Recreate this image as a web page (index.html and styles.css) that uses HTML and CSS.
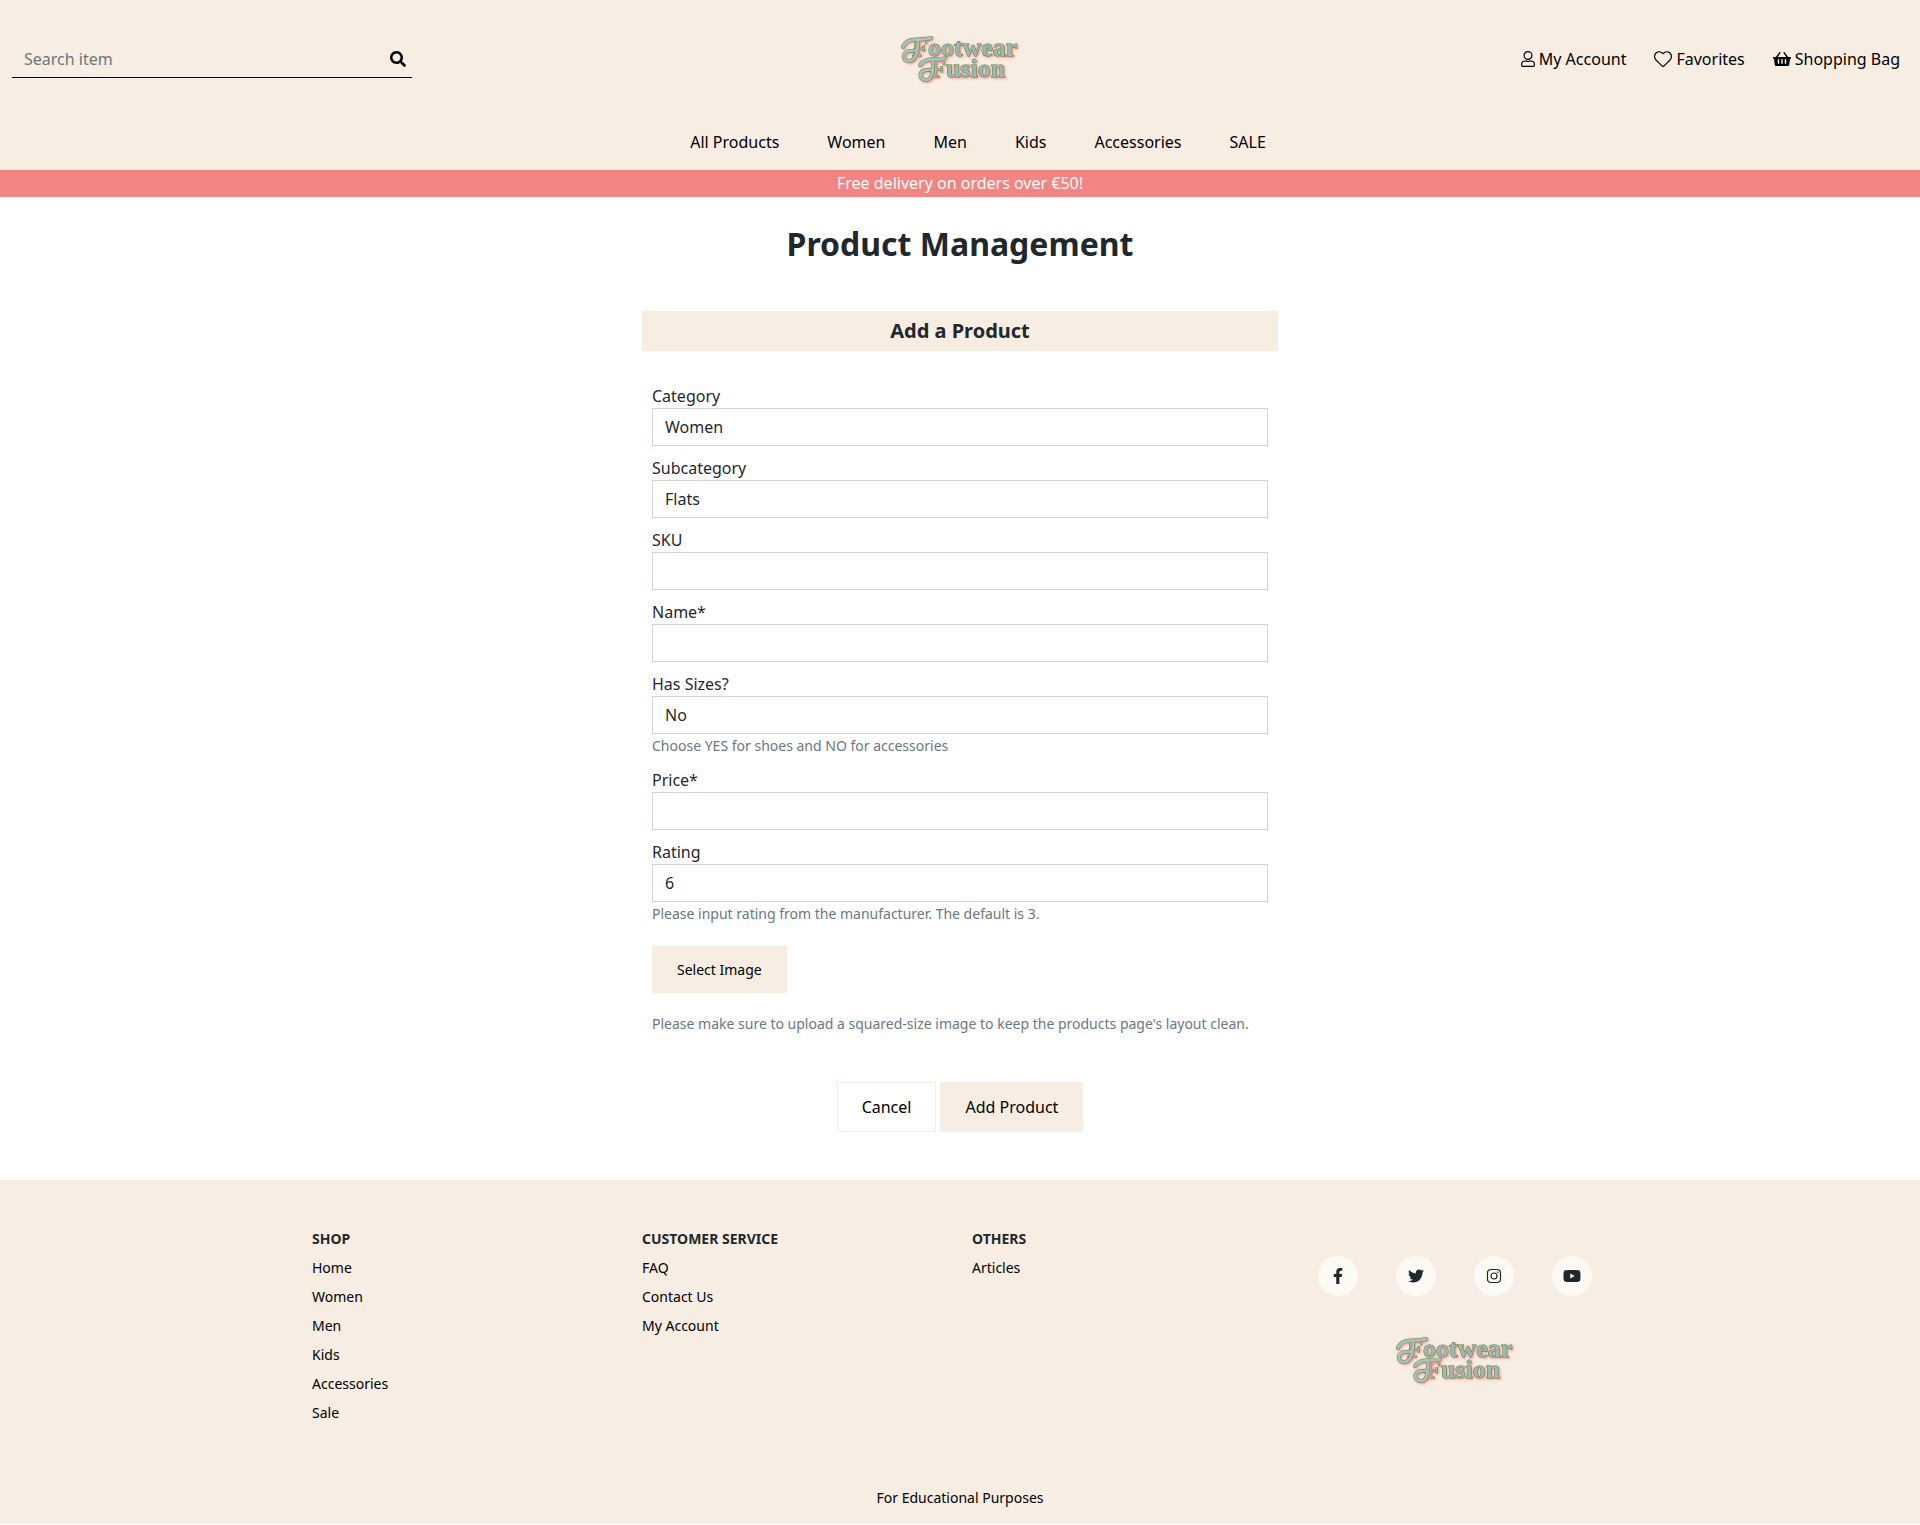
FILE: index.html
```
<!DOCTYPE html>
<html lang="en">
<head>
<meta charset="utf-8">
<meta name="viewport" content="width=device-width, initial-scale=1">
<title>Footwear Fusion - Product Management</title>
<link rel="stylesheet" href="styles.css">
</head>
<body>
<svg class="defs" aria-hidden="true">
  <symbol id="logo" viewBox="0 0 120 52">
    <text class="logo-text" x="12" y="23">Footwear</text>
    <text class="logo-text" x="30" y="44">Fusion</text>
    <g class="logo-swash">
      <path d="M31 5C22 8 7 3 3 14"/>
      <path d="M18 7C18 17 17 28 9 28c-7 0-7-9 0-10 3 0 6 0 8-1"/>
      <path d="M45 25C38 28 26 23 20 32"/>
      <path d="M33 27C33 37 33 47 26 47c-7 0-8-9 0-10 3 0 5 0 7-1"/>
    </g>
    <g class="logo-swash-fill">
      <path d="M31 5C22 8 7 3 3 14"/>
      <path d="M18 7C18 17 17 28 9 28c-7 0-7-9 0-10 3 0 6 0 8-1"/>
      <path d="M45 25C38 28 26 23 20 32"/>
      <path d="M33 27C33 37 33 47 26 47c-7 0-8-9 0-10 3 0 5 0 7-1"/>
    </g>
  </symbol>
</svg>

<header class="site-header">
  <div class="top-bar">
    <form class="search" role="search">
      <input class="search-input" type="search" placeholder="Search item" aria-label="Search item">
      <button class="search-button" type="button" aria-label="Search">
        <svg class="icon" viewBox="0 0 512 512"><path d="M505 442.700 405.300 343c-4.500-4.500-10.600-7-17-7H372c27.600-35.300 44-79.700 44-128C416 93.100 322.900 0 208 0S0 93.100 0 208s93.100 208 208 208c48.300 0 92.700-16.400 128-44v16.300c0 6.400 2.500 12.500 7 17l99.700 99.700c9.400 9.400 24.600 9.400 33.900 0l28.300-28.300c9.400-9.400 9.400-24.600.1-34zM208 336c-70.700 0-128-57.200-128-128 0-70.700 57.200-128 128-128 70.700 0 128 57.200 128 128 0 70.700-57.200 128-128 128z"/></svg>
      </button>
    </form>
    <a class="brand" href="#" aria-label="Footwear Fusion"><svg class="logo"><use href="#logo"/></svg></a>
    <nav class="user-links" aria-label="Account">
      <a href="#"><svg class="icon icon-line" viewBox="0 0 14 16"><circle cx="7" cy="4.500" r="3.900"/><path d="M4.200 10C2 10 .6 11.700.6 13.700v.6c0 .6.500 1.100 1.100 1.100h10.600c.6 0 1.100-.5 1.100-1.100v-.6c0-2-1.400-3.700-3.600-3.700-.8 0-1.300.5-2.800.5S5 10 4.200 10z"/></svg>My Account</a>
      <a href="#"><svg class="icon icon-line" viewBox="0 0 18 16"><path d="M9 2.700C7.200.6 4.300.1 2.300 1.800c-2.400 2-2.100 5.300-.3 7.200l6.200 6.100c.5.500 1.100.5 1.600 0L16 9c1.800-1.900 2.100-5.200-.3-7.200C13.700.1 10.800.6 9 2.700z"/></svg>Favorites</a>
      <a href="#"><svg class="icon" viewBox="0 0 576 512"><path d="M576 216v16c0 13.300-10.700 24-24 24h-8l-26.100 182.800C514.500 462.400 494.300 480 470.400 480H105.600c-23.900 0-44.100-17.600-47.500-41.200L32 256h-8c-13.300 0-24-10.700-24-24v-16c0-13.300 10.700-24 24-24h67.300L198.600 44.400c7.900-10.700 22.900-13 33.600-5.200 10.700 7.900 13 22.900 5.200 33.600L150.600 192h274.800L338.600 72.800c-7.900-10.700-5.500-25.700 5.200-33.600 10.700-7.900 25.700-5.500 33.600 5.200L484.700 192H552c13.300 0 24 10.700 24 24zM312 392V280c0-13.300-10.700-24-24-24s-24 10.700-24 24v112c0 13.300 10.700 24 24 24s24-10.700 24-24zm112 0V280c0-13.300-10.700-24-24-24s-24 10.700-24 24v112c0 13.300 10.700 24 24 24s24-10.700 24-24zm-224 0V280c0-13.300-10.700-24-24-24s-24 10.700-24 24v112c0 13.300 10.700 24 24 24s24-10.700 24-24z"/></svg>Shopping Bag</a>
    </nav>
  </div>
  <nav class="main-nav" aria-label="Products">
    <a href="#">All Products</a>
    <a href="#">Women</a>
    <a href="#">Men</a>
    <a href="#">Kids</a>
    <a href="#">Accessories</a>
    <a href="#">SALE</a>
  </nav>
</header>
<p class="delivery-banner">Free delivery on orders over €50!</p>

<main class="page">
  <h1 class="page-title">Product Management</h1>
  <section class="product">
    <h2 class="product-title">Add a Product</h2>
    <form class="product-form">
      <div class="field">
        <label for="category">Category</label>
        <select class="control" id="category"><option>Women</option><option>Men</option><option>Kids</option></select>
      </div>
      <div class="field">
        <label for="subcategory">Subcategory</label>
        <select class="control" id="subcategory"><option>Flats</option></select>
      </div>
      <div class="field">
        <label for="sku">SKU</label>
        <input class="control" id="sku" type="text">
      </div>
      <div class="field">
        <label for="name">Name*</label>
        <input class="control" id="name" type="text">
      </div>
      <div class="field">
        <label for="sizes">Has Sizes?</label>
        <select class="control" id="sizes"><option>No</option><option>Yes</option></select>
        <small class="help">Choose YES for shoes and NO for accessories</small>
      </div>
      <div class="field">
        <label for="price">Price*</label>
        <input class="control" id="price" type="text">
      </div>
      <div class="field">
        <label for="rating">Rating</label>
        <input class="control" id="rating" type="text" value="6">
        <small class="help">Please input rating from the manufacturer. The default is 3.</small>
      </div>
      <button class="select-image" type="button">Select Image</button>
      <small class="help">Please make sure to upload a squared-size image to keep the products page's layout clean.</small>
      <div class="actions">
        <a class="button button-outline" href="#">Cancel</a>
        <button class="button" type="button">Add Product</button>
      </div>
    </form>
  </section>
</main>

<footer class="site-footer">
  <div class="footer-columns">
    <section>
      <h3>Shop</h3>
      <ul>
        <li><a href="#">Home</a></li>
        <li><a href="#">Women</a></li>
        <li><a href="#">Men</a></li>
        <li><a href="#">Kids</a></li>
        <li><a href="#">Accessories</a></li>
        <li><a href="#">Sale</a></li>
      </ul>
    </section>
    <section>
      <h3>Customer Service</h3>
      <ul>
        <li><a href="#">FAQ</a></li>
        <li><a href="#">Contact Us</a></li>
        <li><a href="#">My Account</a></li>
      </ul>
    </section>
    <section>
      <h3>Others</h3>
      <ul>
        <li><a href="#">Articles</a></li>
      </ul>
    </section>
    <section class="social">
      <div class="social-links">
        <a href="#" aria-label="Facebook"><svg class="icon" viewBox="0 0 320 512"><path d="m279.100 288 14.200-92.700h-88.900v-60.100c0-25.300 12.400-50.100 52.200-50.100H297V6.300S260.400 0 225.400 0c-73.200 0-121.100 44.400-121.100 124.700v70.600H22.900V288h81.400v224h100.200V288z"/></svg></a>
        <a href="#" aria-label="Twitter"><svg class="icon" viewBox="0 0 512 512"><path d="M459.400 151.700c.3 4.500.3 9.100.3 13.600 0 138.700-105.600 298.600-298.600 298.600-59.500 0-114.700-17.200-161.100-47.100 8.400 1 16.600 1.300 25.300 1.300 49.100 0 94.200-16.600 130.300-44.800-46.100-1-84.800-31.200-98.100-72.800 6.500 1 13 1.600 19.800 1.600 9.400 0 18.800-1.300 27.600-3.600-48.100-9.700-84.100-52-84.100-103v-1.300c14 7.800 30.200 12.700 47.400 13.300-28.300-18.800-46.800-51-46.800-87.400 0-19.500 5.200-37.400 14.300-53 51.700 63.700 129.300 105.300 216.400 109.800-1.600-7.800-2.600-15.900-2.600-24 0-57.800 46.800-104.900 104.900-104.900 30.200 0 57.500 12.700 76.700 33.100 23.700-4.500 46.500-13.300 66.600-25.300-7.800 24.400-24.400 44.800-46.100 57.800 21.100-2.300 41.600-8.100 60.400-16.200-14.300 20.800-32.200 39.300-52.600 54.300z"/></svg></a>
        <a href="#" aria-label="Instagram"><svg class="icon icon-line" viewBox="0 0 16 16"><rect x="1.500" y="1.500" width="13" height="13" rx="3.500"/><circle cx="8" cy="8" r="3"/><circle class="icon-dot" cx="11.700" cy="4.300" r=".8"/></svg></a>
        <a href="#" aria-label="YouTube"><svg class="icon" viewBox="0 0 576 512"><path d="M549.700 124.100c-6.300-23.700-24.800-42.300-48.300-48.600C458.800 64 288 64 288 64S117.200 64 74.600 75.500c-23.500 6.300-42 24.900-48.300 48.600C14.900 167 14.900 256.400 14.900 256.400s0 89.400 11.400 132.300c6.300 23.700 24.800 41.500 48.300 47.800C117.200 448 288 448 288 448s170.800 0 213.400-11.500c23.500-6.300 42-24.200 48.300-47.800 11.400-42.900 11.400-132.300 11.400-132.300s0-89.400-11.400-132.300zM232.200 337.600V175.200l142.700 81.200z"/></svg></a>
      </div>
      <a class="brand" href="#" aria-label="Footwear Fusion"><svg class="logo"><use href="#logo"/></svg></a>
    </section>
  </div>
  <p class="footer-note">For Educational Purposes</p>
</footer>
</body>
</html>
```
FILE: styles.css
```
:root {
  --cream: #f7ede2;
  --ink: #1f282c;
  --muted: #6c787f;
}

*,
*::before,
*::after {
  box-sizing: border-box;
}

body {
  margin: 0;
  background: #fff;
  color: var(--ink);
  font: 16px/24px "Noto Sans", sans-serif;
}

h1, h2, h3, p, ul {
  margin: 0;
  padding: 0;
}

ul {
  list-style: none;
}

a {
  color: #000;
  text-decoration: none;
}

button, input, select {
  font: inherit;
}

.defs {
  display: none;
}

.icon {
  height: 16px;
  fill: currentColor;
}

.icon-line {
  fill: none;
  stroke: currentColor;
  stroke-width: 1.2;
}

.icon-dot {
  fill: currentColor;
  stroke: none;
}

/* Header */
.site-header {
  background: var(--cream);
}

.top-bar {
  display: grid;
  grid-template-columns: 1fr auto 1fr;
  align-items: center;
  height: 118px;
  padding: 0 12px;
}

.search {
  display: flex;
  width: 400px;
  height: 38px;
  border-bottom: 1px solid #000;
}

.search-input {
  flex: 1;
  min-width: 0;
  padding: 0 12px;
  border: 0;
  background: transparent;
  color: var(--ink);
}

.search-input::placeholder {
  color: var(--muted);
  opacity: 1;
}

.search-button {
  display: flex;
  align-items: center;
  padding: 0 6px;
  border: 0;
  background: transparent;
}

.brand {
  display: block;
}

.logo {
  display: block;
  width: 120px;
  height: 52px;
}

.logo-swash,
.logo-swash-fill {
  fill: none;
  stroke: #5c8a50;
  stroke-width: 4;
  stroke-linecap: round;
}

.logo-swash {
  filter: drop-shadow(1px 1px 1px #ff8f80);
}

.logo-swash-fill {
  stroke: #a9c0bb;
  stroke-width: 3;
}

.logo-text {
  fill: #9db8b2;
  stroke: #4f8545;
  stroke-width: 1;
  paint-order: stroke;
  font: bold 26px "Liberation Serif", serif;
  filter: drop-shadow(1px 1px 1px #ff8f80);
}

.user-links {
  display: flex;
  justify-content: flex-end;
  gap: 28px;
  padding-right: 8px;
}

.user-links a {
  display: flex;
  align-items: center;
  gap: 4px;
}

.main-nav {
  display: flex;
  justify-content: center;
  gap: 48px;
  padding: 12px 0 16px 36px;
}

.delivery-banner {
  padding: 1px 0 2px;
  background: #f28482;
  color: #fff;
  text-align: center;
}

/* Product form */
.page {
  padding: 23px 12px 48px;
}

.page-title {
  margin-bottom: 43px;
  font-size: 32px;
  line-height: 48px;
  text-align: center;
}

.product {
  max-width: 636px;
  margin: 0 auto;
}

.product-title {
  padding: 8px 0;
  background: var(--cream);
  font-size: 20px;
  line-height: 24px;
  text-align: center;
}

.product-form {
  padding: 33px 10px 0;
}

.field {
  margin-bottom: 10px;
}

.field label {
  display: block;
}

.control {
  display: block;
  width: 100%;
  height: 38px;
  padding: 6px 12px;
  border: 1px solid #ced4da;
  border-radius: 0;
  background: #fff;
  color: var(--ink);
  appearance: none;
}

.help {
  display: block;
  color: var(--muted);
  font-size: 14px;
}

.select-image {
  display: block;
  margin: 20px 0 19px;
  padding: 12px 25px;
  border: 0;
  background: var(--cream);
  color: #000;
  font-size: 14px;
  line-height: 23px;
}

.actions {
  display: flex;
  justify-content: center;
  gap: 4px;
  margin-top: 46px;
}

.button {
  padding: 12px 24px;
  border: 1px solid var(--cream);
  background: var(--cream);
  color: #000;
}

.button-outline {
  background: #fff;
}

/* Footer */
.site-footer {
  padding: 44px 12px 14px;
  background: var(--cream);
  font-size: 14px;
}

.footer-columns {
  display: grid;
  grid-template-columns: repeat(4, 1fr);
  column-gap: 24px;
  max-width: 1296px;
  margin: 0 auto;
}

.site-footer h3 {
  font-size: 14px;
  line-height: 29px;
  text-transform: uppercase;
}

.site-footer li {
  line-height: 29px;
}

.social {
  display: flex;
  flex-direction: column;
  align-items: center;
  gap: 38px;
  padding-top: 32px;
}

.social-links {
  display: flex;
  justify-content: center;
  gap: 38px;
}

.social-links a {
  display: grid;
  place-items: center;
  width: 40px;
  height: 40px;
  border-radius: 50%;
  background: #fdf9f4;
  color: var(--ink);
}

.footer-note {
  margin-top: 59px;
  color: #000;
  text-align: center;
}
```
